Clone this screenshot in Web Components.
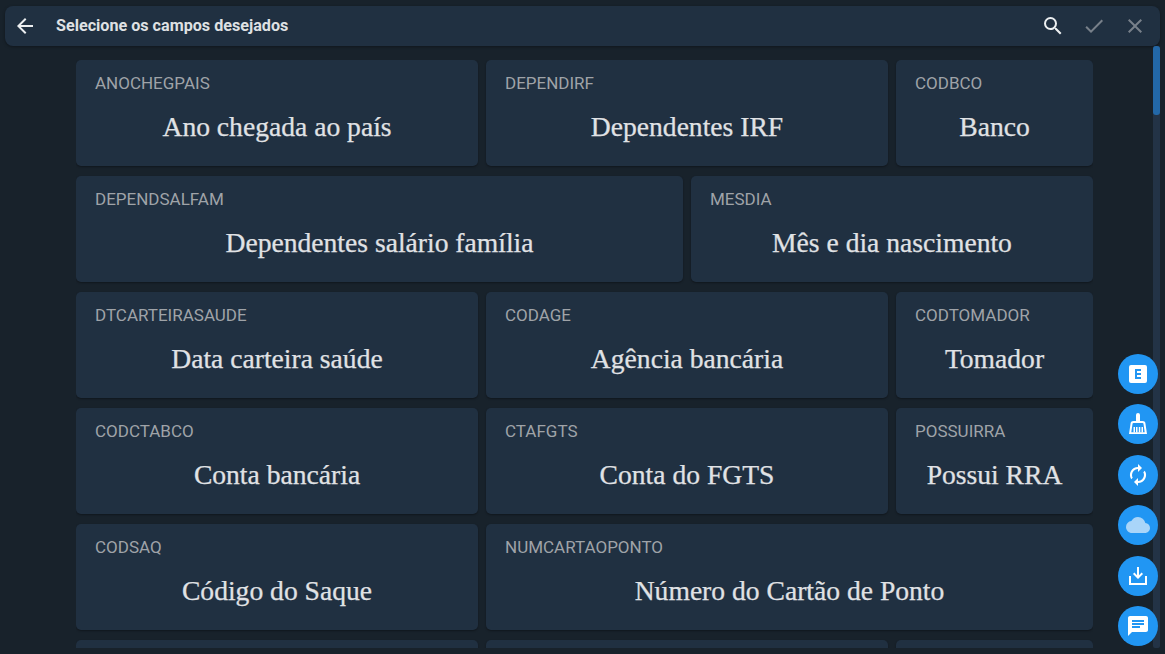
<!DOCTYPE html>
<html lang="pt"><head><meta charset="utf-8"><title>Campos</title>
<style>
html,body{margin:0;height:100%;overflow:hidden;background:#18222b}
body{font-family:Roboto,sans-serif}
</style></head><body>
<app-shell>
<top-bar title="Selecione os campos desejados"></top-bar>
<field-grid>
<field-card code="ANOCHEGPAIS" span="2">Ano chegada ao país</field-card>
<field-card code="DEPENDIRF" span="2">Dependentes IRF</field-card>
<field-card code="CODBCO" span="1">Banco</field-card>
<field-card code="DEPENDSALFAM" span="3">Dependentes salário família</field-card>
<field-card code="MESDIA" span="2">Mês e dia nascimento</field-card>
<field-card code="DTCARTEIRASAUDE" span="2">Data carteira saúde</field-card>
<field-card code="CODAGE" span="2">Agência bancária</field-card>
<field-card code="CODTOMADOR" span="1">Tomador</field-card>
<field-card code="CODCTABCO" span="2">Conta bancária</field-card>
<field-card code="CTAFGTS" span="2">Conta do FGTS</field-card>
<field-card code="POSSUIRRA" span="1">Possui RRA</field-card>
<field-card code="CODSAQ" span="2">Código do Saque</field-card>
<field-card code="NUMCARTAOPONTO" span="3">Número do Cartão de Ponto</field-card>
<field-card span="2"></field-card>
<field-card span="2"></field-card>
<field-card span="1"></field-card>
</field-grid>
<fab-stack></fab-stack>
</app-shell>
<script>
const def=(n,html,extra)=>customElements.define(n,class extends HTMLElement{
  connectedCallback(){ if(this.shadowRoot) return; const r=this.attachShadow({mode:'open'}); r.innerHTML=typeof html==='function'?html(this):html; }
});
def('app-shell',`<style>
:host{display:flex;flex-direction:column;height:654px;position:relative;overflow:hidden}
.sb{position:absolute;left:1153px;top:46px;width:7px;height:602px;background:#233346;border-radius:2px}
.th{height:69px;background:#2368a8;border-radius:3px}
</style><slot></slot><div class="sb"><div class="th"></div></div>`);
const ic=(d,c,s=24)=>`<svg width="${s}" height="${s}" viewBox="0 0 24 24" fill="${c}"><path d="${d}"/></svg>`;
def('top-bar',e=>`<style>
:host{display:flex;align-items:center;height:40px;margin:6px 5px 0;background:#203041;border-radius:8px;box-shadow:0 1px 3px rgba(0,0,0,.35);flex:none;color:#e0e0e0}
.back{display:flex;margin-left:8px;width:24px;height:24px}
.t{margin-left:19px;font:700 16.15px/20px Roboto,sans-serif;flex:1;white-space:nowrap;color:#dfe1e3}
.a{display:flex;width:24px;height:24px;margin-right:17px}
.a:last-child{margin-right:13px}
</style>
<span class="back">${ic('M20 11H7.83l5.59-5.59L12 4l-8 8 8 8 1.41-1.41L7.83 13H20v-2z','#eceff1')}</span>
<span class="t">${e.getAttribute('title')}</span>
<span class="a">${ic('M15.5 14h-.79l-.28-.27A6.47 6.47 0 0 0 16 9.5 6.5 6.5 0 1 0 9.5 16c1.61 0 3.09-.59 4.23-1.57l.27.28v.79l5 4.99L20.49 19l-4.99-5zm-6 0C7.01 14 5 11.99 5 9.5S7.01 5 9.5 5 14 7.01 14 9.5 11.99 14 9.5 14z','#eceff1')}</span>
<span class="a">${ic('M9 16.17 4.83 12l-1.42 1.41L9 19 21 7l-1.41-1.41z','#78808a')}</span>
<span class="a">${ic('M19 6.41 17.59 5 12 10.59 6.41 5 5 6.41 10.59 12 5 17.59 6.41 19 12 13.41 17.59 19 19 17.59 13.41 12z','#78808a')}</span>`);
def('field-grid',`<style>
:host{display:grid;grid-template-columns:repeat(5,197px);grid-auto-rows:106px;gap:10px 8px;margin:14px 0 0 76px;height:588px;overflow:hidden;align-content:start;flex:none;width:1017px}
</style><slot></slot>`);
def('field-card',e=>`<style>
:host{display:flex;flex-direction:column;grid-column:span ${e.getAttribute('span')};background:#203041;border-radius:5px;box-shadow:0 1px 2px rgba(0,0,0,.35);box-sizing:border-box;padding:14px 19px 0;min-width:0}
.c{font:400 17px/19px Roboto,sans-serif;color:#9fa3a8;white-space:nowrap;height:19px}
.v{font:400 27.6px/32px "Liberation Serif",serif;color:#e0e2e5;-webkit-text-stroke:.25px #e0e2e5;text-align:center;margin-top:18px;white-space:nowrap}
</style><div class="c">${e.getAttribute('code')||''}</div><div class="v"><slot></slot></div>`);
const fab=(svg)=>`<span class="f">${svg}</span>`;
def('fab-stack',`<style>
:host{position:absolute;left:1118px;top:354px;display:flex;flex-direction:column;gap:10.4px;z-index:2}
.f{width:40px;height:40px;border-radius:50%;background:#2196f3;display:flex;align-items:center;justify-content:center}
svg{display:block}
</style>`+
fab(ic('M5 3h14a2 2 0 0 1 2 2v14a2 2 0 0 1-2 2H5a2 2 0 0 1-2-2V5a2 2 0 0 1 2-2zm10 4H9v10h6v-2h-4v-2h4v-2h-4V9h4V7z','#fff'))+
fab(`<svg width="24" height="24" viewBox="0 0 24 24" fill="#fff"><path fill-rule="evenodd" d="M10 3a2 2 0 0 1 4 0V9h2.500a3 3 0 0 1 3 3L21 22H3L4.500 12a3 3 0 0 1 3-3H10zM7.500 11a1 1 0 0 0-1 1L5.300 20.200H18.700L17.500 12a1 1 0 0 0-1-1z"/><path d="M7.500 15h1.500v5.500H7.500zM10 15h1.500v5.500H10zM12.800 15h1.500v5.500h-1.500zM15.500 15H17v5.500h-1.500z"/></svg>`)+
fab(ic('M12 6v3l4-4-4-4v3a8 8 0 0 0-6.800 12.240L6.700 14.800A5.870 5.870 0 0 1 6 12a6 6 0 0 1 6-6zm6.800 1.760L17.300 9.200c.44.84.7 1.790.7 2.800a6 6 0 0 1-6 6v-3l-4 4 4 4v-3a8 8 0 0 0 6.800-12.240z','#fff'))+
fab(ic('M19.350 10.040A7.490 7.490 0 0 0 12 4C9.110 4 6.600 5.640 5.350 8.040A5.994 5.994 0 0 0 0 14c0 3.310 2.690 6 6 6h13c2.760 0 5-2.240 5-5 0-2.640-2.050-4.780-4.650-4.960z','#a9d5f9'))+
fab(ic('M11 3h2v8.200l2.600-2.600L17 10l-5 5-5-5 1.400-1.400 2.600 2.600zM3 12h2v7h14v-7h2v9H3z','#fff'))+
fab(ic('M20 2H4c-1.100 0-2 .9-2 2v18l4-4h14c1.100 0 2-.9 2-2V4c0-1.100-.9-2-2-2zM6 9h12v2H6V9zm8 5H6v-2h8v2zm4-6H6V6h12v2z','#fff')));
</script>
</body></html>
